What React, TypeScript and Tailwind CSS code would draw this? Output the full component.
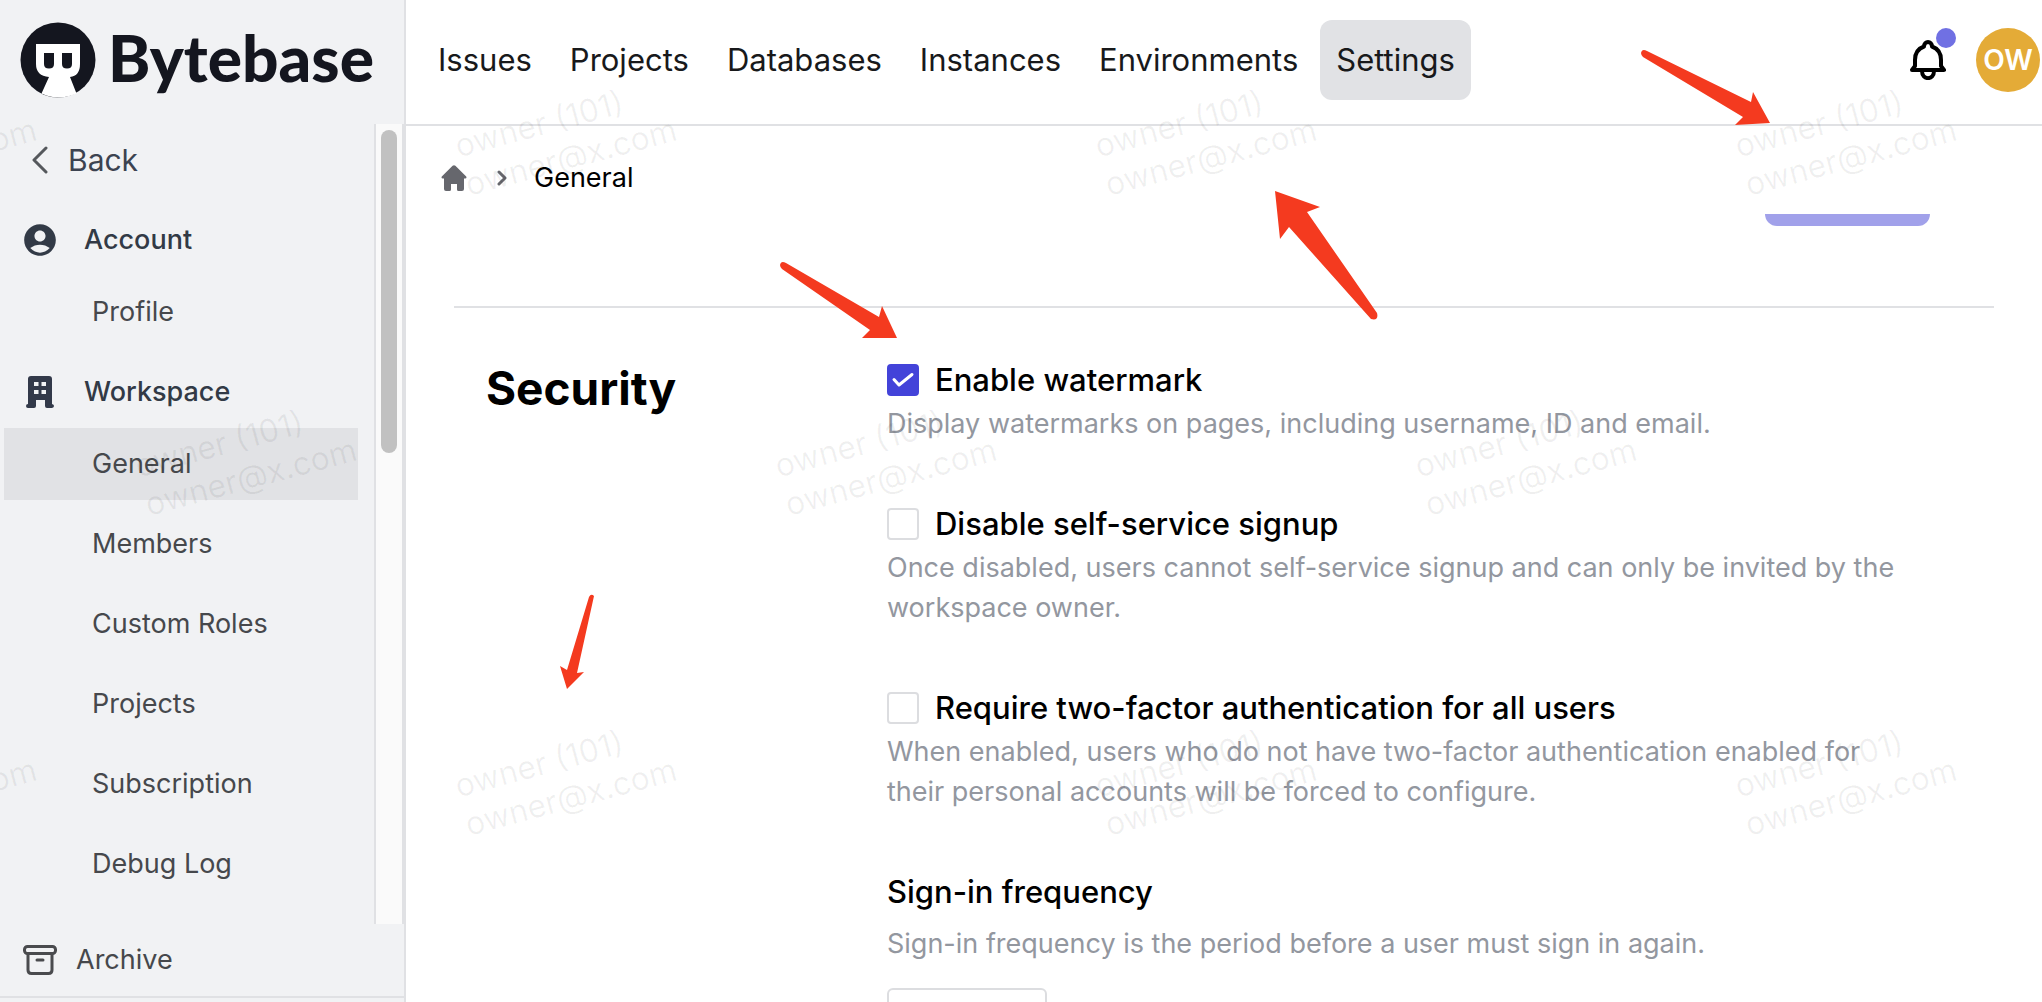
import { MdAccountCircle } from "react-icons/md";

const settings = [
  {
    title: "Enable watermark",
    text: "Display watermarks on pages, including username, ID and email.",
    checked: true,
  },
  {
    title: "Disable self-service signup",
    text: "Once disabled, users cannot self-service signup and can only be invited by the workspace owner.",
    checked: false,
  },
  {
    title: "Require two-factor authentication for all users",
    text: "When enabled, users who do not have two-factor authentication enabled for their personal accounts will be forced to configure.",
    checked: false,
  },
];

const workspaceLinks = ["General", "Members", "Custom Roles", "Projects", "Subscription", "Debug Log"];
const navLinks = ["Issues", "Projects", "Databases", "Instances", "Environments", "Settings"];

function LogoMark() {
  return (
    <svg viewBox="0 0 76 76" className="size-[76px] shrink-0" aria-hidden="true">
      <circle cx="38" cy="38" r="37.5" fill="#14161f" />
      <path d="M16 22h44v20q0 12-10 13l6.500 16.500Q38 79.500 21.500 71.500L29 55Q16 54 16 42z" fill="#fff" />
      <path d="M24 31h10v11q0 4.500-5 4.500t-5-4.500zM42 31h10v11q0 4.500-5 4.500t-5-4.500z" fill="#14161f" />
    </svg>
  );
}

function ChevronLeft() {
  return (
    <svg viewBox="0 0 16 28" className="h-7 w-4" fill="none" stroke="#55585c" strokeWidth="3" strokeLinecap="round" strokeLinejoin="round" aria-hidden="true">
      <path d="M14 2 2 14l12 12" />
    </svg>
  );
}

function BuildingIcon() {
  return (
    <svg viewBox="0 0 28 32" className="h-8 w-7" fill="#323949" aria-hidden="true">
      <path
        fillRule="evenodd"
        d="M5 0h18q3 0 3 3v25q2 .3 2 2t-2 2h-5q-2 0-2-2v-6h-9v6q0 2-2 2H2q-2 0-2-2t2-2V3q0-3 3-3zM8 6h4.500v4H8zM15.500 6H20v4h-4.500zM8 14h4.500v4H8zM15.500 14H20v4h-4.500z"
      />
    </svg>
  );
}

function ArchiveIcon() {
  return (
    <svg viewBox="0 0 34 30" className="h-[30px] w-[34px]" fill="none" stroke="#4a4b4e" strokeWidth="3" strokeLinejoin="round" strokeLinecap="round" aria-hidden="true">
      <rect x="1.500" y="1.500" width="31" height="7" rx="3" />
      <path d="M5 8.500V25q0 3.500 3.500 3.500h17q3.500 0 3.500-3.500V8.500M14 15h6" />
    </svg>
  );
}

function HomeIcon() {
  return (
    <svg viewBox="0 0 26 26" className="size-[26px]" fill="#66676d" aria-hidden="true">
      <path d="M11.600.8q1.400-1.300 2.800 0l10.800 10.700q.9 1.600-1 2H23V24q0 2-2 2h-3.500q-1.500 0-1.500-1.500V19h-6v5.500Q10 26 8.500 26H5q-2 0-2-2V13.500H1.800q-1.900-.4-1-2z" />
    </svg>
  );
}

function ChevronRight() {
  return (
    <svg viewBox="0 0 10 16" className="h-4 w-[10px]" fill="none" stroke="#66676d" strokeWidth="3" strokeLinecap="round" strokeLinejoin="round" aria-hidden="true">
      <path d="M2 2l6 6-6 6" />
    </svg>
  );
}

function BellIcon() {
  return (
    <svg viewBox="0 0 36 40" className="h-10 w-9" fill="none" stroke="#000" strokeWidth="4" strokeLinejoin="round" strokeLinecap="round" aria-hidden="true">
      <path d="M14 6.500C14 .5 22 .5 22 6.500 29 9 31 14 31 20v6l3 4H2l3-4v-6C5 14 7 9 14 6.500z" />
      <path d="M12 31c0 9.500 12 9.500 12 0" />
    </svg>
  );
}

function Watermark() {
  const mark = (key: number) => (
    <div key={key} className="flex w-[640px] shrink-0 items-center justify-center">
      <div className="-rotate-15 text-[32px] leading-10 whitespace-nowrap">
        <p>owner (101)</p>
        <p>owner@x.com</p>
      </div>
    </div>
  );
  const tiles = [0, 1, 2, 3];
  return (
    <div className="pointer-events-none absolute inset-0 overflow-hidden text-black/6" aria-hidden="true">
      <div className="-mt-[22px]">
        <div className="-ml-[394px] flex h-80">{tiles.map(mark)}</div>
        <div className="-ml-[74px] flex h-80">{tiles.map(mark)}</div>
        <div className="-ml-[394px] flex h-80">{tiles.map(mark)}</div>
      </div>
    </div>
  );
}

function Arrows() {
  return (
    <svg className="pointer-events-none absolute top-0 left-0 h-[1002px] w-[2042px]" viewBox="0 0 2042 1002" fill="#f43a1f" aria-hidden="true">
      <path d="M1641 53q1-5 6-2L1751 102 1753 92 1770 123 1735 125 1743 117 1643 57q-2-2-2-4z" />
      <path d="M780 265q1-5 6-2L879 317 882 306 897 338 862 338 870 330 782 269q-2-2-2-4z" />
      <path d="M1275 191 1320 207 1307 212 1377 313q2 8-6 6L1289 227 1280 239z" />
      <path d="M567 689 560 666 567 670 589 597q2-4 5-1L577 673 584 672z" />
    </svg>
  );
}

function SideLink({ label, active }: { label: string; active?: boolean }) {
  return (
    <li>
      <a href="#" className={active ? "flex h-[72px] items-center bg-[#e1e2e5] pl-[88px]" : "flex h-[72px] items-center pl-[88px]"}>
        {label}
      </a>
    </li>
  );
}

function Sidebar() {
  return (
    <aside className="flex w-[406px] shrink-0 flex-col border-r-2 border-[#e0e1e4] bg-[#f1f2f4] text-[27px] text-[#46484c]">
      <a href="#" className="flex h-[124px] shrink-0 items-center gap-3 pb-1 pl-5 text-[64px] leading-none font-black text-[#14161f]">
        <LogoMark />
        <span className="pb-1 font-['Lato',sans-serif]">Bytebase</span>
      </a>
      <div className="flex min-h-0 flex-1">
        <nav className="flex min-w-0 flex-1 flex-col gap-2 overflow-hidden pr-4 pl-1">
          <a href="#" className="flex h-[72px] shrink-0 items-center gap-5 pl-7 text-[30px] text-[#3c4350]">
            <ChevronLeft />
            Back
          </a>
          <section>
            <h2 className="flex h-[72px] items-center gap-[25px] pl-[17px] font-medium text-[#323a46]">
              <MdAccountCircle className="size-[38px]" />
              Account
            </h2>
            <ul>
              <SideLink label="Profile" />
            </ul>
          </section>
          <section>
            <h2 className="flex h-[72px] items-center gap-[30px] pl-[22px] font-medium text-[#323a46]">
              <BuildingIcon />
              Workspace
            </h2>
            <ul className="flex flex-col gap-2">
              {workspaceLinks.map((label) => (
                <SideLink key={label} label={label} active={label === "General"} />
              ))}
            </ul>
          </section>
        </nav>
        <div className="flex w-[30px] shrink-0 justify-center border-x-2 border-[#e0e1e4] bg-[#fafafa] pt-[6px]">
          <div className="h-[323px] w-4 rounded-full bg-[#c1c1c1]" />
        </div>
      </div>
      <a href="#" className="mb-1 flex h-[74px] shrink-0 items-center gap-[19px] border-b-2 border-[#e0e1e4] pl-[23px]">
        <ArchiveIcon />
        Archive
      </a>
    </aside>
  );
}

function Header() {
  return (
    <header className="flex h-[126px] shrink-0 items-center border-b-2 border-[#e0e1e4] pr-[2px] pb-1 pl-4">
      <nav className="flex flex-1 gap-[6px] text-[31px] text-[#18191b]">
        {navLinks.map((label) => (
          <a
            key={label}
            href="#"
            className={label === "Settings" ? "flex h-20 items-center rounded-xl bg-[#e1e2e5] px-4" : "flex h-20 items-center px-4"}
          >
            {label}
          </a>
        ))}
      </nav>
      <button type="button" aria-label="Notifications" className="relative mr-[30px]">
        <BellIcon />
        <span className="absolute -top-3 -right-[10px] size-5 rounded-full bg-[#7070e3]" />
      </button>
      <button type="button" className="flex size-16 items-center justify-center rounded-full bg-[#e4ab37] text-[28px] font-semibold text-white">
        OW
      </button>
    </header>
  );
}

export default function App() {
  return (
    <div className="relative flex h-screen overflow-hidden bg-white font-['Inter',sans-serif]">
      <Sidebar />
      <div className="flex min-w-0 flex-1 flex-col">
        <Header />
        <nav aria-label="Breadcrumb" className="flex h-[88px] shrink-0 items-center pt-8 pb-4 pl-[35px] text-[27px] text-black">
          <a href="#" aria-label="Home">
            <HomeIcon />
          </a>
          <span className="mr-[27px] ml-[30px]">
            <ChevronRight />
          </span>
          General
        </nav>
        <main className="min-h-0 flex-1 overflow-hidden px-12">
          <div className="flex h-[92px] justify-end pr-16">
            <button type="button" aria-label="Update" className="h-3 w-[165px] rounded-b-xl bg-[#a1a1ea]" />
          </div>
          <section className="flex border-t-2 border-[#e0e1e4] pt-[52px] pr-20 pl-8">
            <h1 className="w-[401px] shrink-0 text-[46px] leading-[56px] font-bold text-black">Security</h1>
            <div className="flex min-w-0 flex-1 flex-col gap-[60px] text-[27px] leading-10 text-[#93979f]">
              {settings.map((item) => (
                <div key={item.title} className="flex flex-col gap-1">
                  <label className="flex h-10 items-center gap-4 text-[31px] font-medium text-black">
                    <span className="relative flex size-8">
                      <input
                        type="checkbox"
                        defaultChecked={item.checked}
                        className="peer size-8 appearance-none rounded-[4px] border-2 border-[#dcdde0] bg-white checked:border-[#4343d9] checked:bg-[#4343d9]"
                      />
                      <svg viewBox="0 0 32 32" className="pointer-events-none absolute inset-0 hidden peer-checked:block" fill="none" stroke="#fff" strokeWidth="3" strokeLinecap="round" strokeLinejoin="round" aria-hidden="true">
                        <path d="M7 15.500l5 5.500L25 10.500" />
                      </svg>
                    </span>
                    {item.title}
                  </label>
                  <p>{item.text}</p>
                </div>
              ))}
              <div>
                <label htmlFor="frequency" className="block text-[31px] font-medium text-black">
                  Sign-in frequency
                </label>
                <p className="mt-3 mb-6">Sign-in frequency is the period before a user must sign in again.</p>
                <input id="frequency" type="text" className="block h-[68px] w-40 rounded-[6px] border-2 border-[#dcdde0]" />
              </div>
            </div>
          </section>
        </main>
      </div>
      <Watermark />
      <Arrows />
    </div>
  );
}
